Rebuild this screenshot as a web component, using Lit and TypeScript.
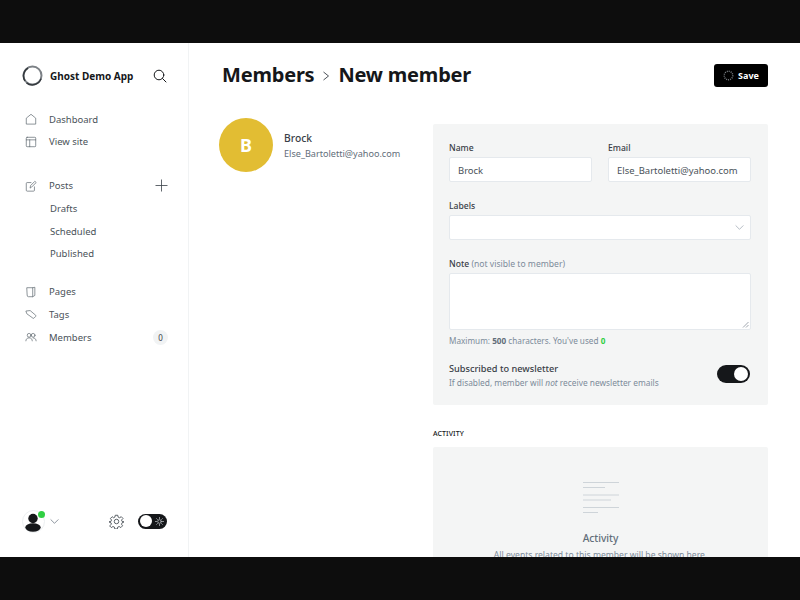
import { LitElement, html, css, svg } from "lit";
import { customElement } from "lit/decorators.js";

const ic = (body: unknown, size = 12, cls = "ic") => html`<svg class=${cls} width=${size} height=${size} viewBox="0 0 14 14" fill="none" stroke="currentColor" stroke-width="0.8" stroke-linecap="round" stroke-linejoin="round">${body}</svg>`;

const icons = {
  home: svg`<path d="M1.500 12.500V6L7 1.500 12.500 6v6.500z"/>`,
  site: svg`<rect x="1.500" y="1.500" width="11" height="11" rx="1"/><path d="M1.500 4.500h11M5.500 4.500v8"/>`,
  posts: svg`<path d="M7 3H2.500a1 1 0 0 0-1 1v8a1 1 0 0 0 1 1h7.500a1 1 0 0 0 1-1V8"/><path d="M6 9l.500-2.500L11.500 1.500 13 3 8 8z"/>`,
  pages: svg`<path d="M2.500 2h6.500v10.500H4a1.500 1.500 0 0 1-1.500-1.500z"/><path d="M9 2l2.500-.500v9.500L9 12.500"/>`,
  tags: svg`<path d="M1.500 3.500l4.500-.500 6.500 5.500a1 1 0 0 1 0 1.300l-2 2a1 1 0 0 1-1.300 0L2.500 7z"/>`,
  members: svg`<circle cx="4.800" cy="5" r="2.200"/><circle cx="9.500" cy="5" r="2.200"/><path d="M1 11.500c0-2 1.500-3.500 3.800-3.500s3.700 1.500 3.700 3.500M9.500 8c2 0 3.500 1.500 3.500 3.500"/>`,
};

const chev = (size: number) => html`<svg width=${size} height=${size} viewBox="0 0 10 10" fill="none" stroke="currentColor" stroke-width="0.8" stroke-linecap="round" stroke-linejoin="round"><path d="M1 3l4 4 4-4"/></svg>`;

@customElement("app-root")
export class AppRoot extends LitElement {
  static styles = css`
    :host { display: block; width: 800px; height: 600px; font-family: "Noto Sans", "Open Sans", sans-serif; color: #394047; background: #fff; overflow: hidden; }
    * { box-sizing: border-box; }
    .shell { display: flex; flex-direction: column; height: 600px; }
    .bar { height: 43px; background: #0d0d0d; flex: none; }
    .app { flex: 1; display: flex; min-height: 0; overflow: hidden; }

    .side { width: 189px; flex: none; border-right: 1px solid #f1f3f4; display: flex; flex-direction: column; padding: 22px 21px 24px 22px; }
    .brand { display: flex; align-items: center; height: 21px; margin-bottom: 22px; }
    .brand b { font-size: 10px; font-weight: 700; color: #15171a; margin-left: 7px; flex: 1; white-space: nowrap; }
    .search { color: #15171a; display: flex; }
    .nav { display: flex; flex-direction: column; }
    .item { display: flex; align-items: center; height: 22.600px; font-size: 9.500px; color: #4a5259; padding-left: 3px; }
    .item svg.ic { margin-right: 12px; color: #5a636b; flex: none; }
    .item .sp { flex: 1; }
    .sub { padding-left: 28px; }
    .gap { height: 21.500px; }
    .gap2 { height: 15.500px; }
    .count { width: 15px; height: 15px; border-radius: 50%; background: #f1f3f4; font-size: 8px; color: #394047; display: flex; align-items: center; justify-content: center; margin-right: -1px; }
    .plus { color: #394047; display: flex; margin-right: -1px; }
    .foot { margin-top: auto; display: flex; align-items: center; height: 24px; }
    .me { position: relative; width: 23px; height: 23px; border-radius: 50%; border: 1px solid #eceff1; flex: none; display: flex; }
    .dot { position: absolute; top: 0; right: -1px; width: 7px; height: 7px; border-radius: 50%; background: #30cf43; }
    .fchev { color: #626d79; margin-left: 5px; display: flex; }
    .gear { margin-left: 50px; color: #394047; display: flex; }
    .mode { margin-left: 14px; width: 29px; height: 15px; border-radius: 8px; background: #15171a; padding: 1.500px; display: flex; align-items: center; justify-content: space-between; color: #fff; }
    .knob { width: 12px; height: 12px; border-radius: 50%; background: #fff; }
    .mode svg { margin-right: 2px; }

    .main { flex: 1; min-width: 0; padding: 20px 32px 0 30px; overflow: hidden; }
    .head { display: flex; align-items: center; justify-content: space-between; height: 24px; margin-left: 3px; }
    h1 { margin: 0; font-size: 20px; font-weight: 700; color: #15171a; display: flex; align-items: center; letter-spacing: -0.2px; white-space: nowrap; line-height: 24px; }
    .crumb { color: #394047; margin: 2px 7px 0 7px; display: flex; }
    .save { width: 54px; height: 23px; border-radius: 3px; background: #000; color: #fff; font-size: 9px; font-weight: 700; display: flex; align-items: center; justify-content: center; gap: 4px; }
    .cols { display: flex; margin-top: 31px; }
    .who { width: 214px; flex: none; display: flex; align-items: flex-start; }
    .av { width: 54px; height: 54px; border-radius: 50%; background: #e2bd33; color: #fff; font-size: 18px; font-weight: 700; display: flex; align-items: center; justify-content: center; flex: none; }
    .wt { margin-left: 11px; padding-top: 13px; }
    .wn { font-size: 10.300px; font-weight: 500; color: #394047; line-height: 15px; }
    .we { font-size: 9.100px; color: #626d79; line-height: 15px; white-space: nowrap; }
    .right { width: 335px; flex: none; padding-top: 6px; }
    .card { background: #f4f5f5; border-radius: 2px; padding: 18px 17px 0 16px; height: 280.500px; }
    .two { display: grid; grid-template-columns: 143px 143px; column-gap: 16px; }
    label { display: block; font-size: 8.600px; line-height: 12px; color: #394047; font-weight: 500; margin-bottom: 3px; }
    label span { color: #7c8b9a; font-weight: 400; }
    .input { height: 25px; background: #fff; border: 1px solid #e5e9ed; border-radius: 2px; font-size: 9.450px; color: #4a5259; padding: 1px 8px 0; display: flex; align-items: center; white-space: nowrap; }
    .select { justify-content: flex-end; color: #9aa5b0; padding: 0 6px 0 0; }
    .f2 { margin-top: 18px; }
    .f3 { margin-top: 18px; }
    .area { position: relative; height: 57px; background: #fff; border: 1px solid #e5e9ed; border-radius: 2px; }
    .grip { position: absolute; right: 1px; bottom: 1px; color: #626d79; display: flex; }
    .hint { font-size: 8.200px; color: #7c8b9a; margin-top: 5px; line-height: 12px; white-space: nowrap; }
    .hint b { color: #626d79; font-weight: 700; }
    .hint i { color: #30cf43; font-style: normal; font-weight: 700; }
    .sw { display: flex; align-items: flex-start; justify-content: space-between; margin-top: 15px; }
    .swt { font-size: 9.200px; color: #394047; font-weight: 500; line-height: 13px; }
    .sws { font-size: 8.350px; color: #7c8b9a; line-height: 13px; margin-top: 1px; }
    .tog { width: 33px; height: 18px; border-radius: 9px; background: #15171a; padding: 2px; display: flex; justify-content: flex-end; margin: 3px 1px 0 0; }
    .tog span { width: 14px; height: 14px; border-radius: 50%; background: #fff; }
    .acth { font-size: 7px; font-weight: 500; color: #15171a; margin-top: 24.500px; line-height: 10px; letter-spacing: 0.100px; }
    .acard { background: #f4f5f5; border-radius: 2px; margin-top: 8px; height: 200px; padding-top: 35px; display: flex; flex-direction: column; align-items: center; }
    .acard svg { display: block; }
    .at { font-size: 10.200px; font-weight: 500; color: #626d79; margin-top: 18px; line-height: 14px; }
    .ad { font-size: 8.600px; color: #7c8b9a; margin-top: 3.500px; line-height: 13px; white-space: nowrap; }
  `;

  item(icon: unknown, label: string, extra: unknown = "") {
    return html`<div class="item">${ic(icon)}<span>${label}</span>${extra ? html`<span class="sp"></span>${extra}` : ""}</div>`;
  }

  render() {
    return html`<div class="shell">
      <div class="bar"></div>
      <div class="app">
        <aside class="side">
          <div class="brand">
            <svg width="21" height="21" viewBox="0 0 21 21" fill="none"><circle cx="10.500" cy="10.500" r="9" stroke="#7c8186" stroke-width="2"/><path d="M3 16a9.200 9.200 0 0 1 3-13M4.500 17.800a9.200 9.200 0 0 0 14.500-4" stroke="#34393e" stroke-width="1.500"/></svg>
            <b>Ghost Demo App</b>
            <span class="search"><svg width="14" height="14" viewBox="0 0 14 14" fill="none" stroke="currentColor" stroke-width="1" stroke-linecap="round"><circle cx="6" cy="6" r="4.800"/><path d="M9.500 9.500l3.500 3.500"/></svg></span>
          </div>
          <nav class="nav">
            ${this.item(icons.home, "Dashboard")}
            ${this.item(icons.site, "View site")}
            <div class="gap"></div>
            ${this.item(icons.posts, "Posts", html`<span class="plus"><svg width="13" height="13" viewBox="0 0 13 13" fill="none" stroke="currentColor" stroke-width="0.800"><path d="M6.500 0.500v12M0.500 6.500h12"/></svg></span>`)}
            <div class="item sub">Drafts</div>
            <div class="item sub">Scheduled</div>
            <div class="item sub">Published</div>
            <div class="gap2"></div>
            ${this.item(icons.pages, "Pages")}
            ${this.item(icons.tags, "Tags")}
            ${this.item(icons.members, "Members", html`<span class="count">0</span>`)}
          </nav>
          <div class="foot">
            <div class="me">
              <svg width="21" height="21" viewBox="0 0 21 21" fill="#15171a"><circle cx="10" cy="7.500" r="4.700"/><ellipse cx="10" cy="16.500" rx="7.700" ry="4.200"/></svg>
              <span class="dot"></span>
            </div>
            <span class="fchev">${chev(9)}</span>
            <span class="gear"><svg width="15" height="15" viewBox="0 0 24 24" fill="none" stroke="currentColor" stroke-width="1.300" stroke-linejoin="round"><circle cx="12" cy="12" r="3.600"/><path d="M10 2h4l.600 3 2.400 1 2.600-1.700 2.800 2.800L20 9.700l1 2.300 3 .600v0l-3 1.400-1 2.300 1.700 2.600-2.800 2.800-2.600-1.700-2.400 1-.600 3h-4l-.600-3-2.400-1-2.600 1.700-2.800-2.800L4 16.300l-1-2.300-3-1.400v0l3-.600 1-2.300-1.700-2.600 2.800-2.800L7 6l2.400-1z"/></svg></span>
            <span class="mode"><span class="knob"></span><svg width="9" height="9" viewBox="0 0 10 10" fill="none" stroke="#c8cdd1" stroke-width="0.800" stroke-linecap="round"><circle cx="5" cy="5" r="2"/><path d="M5 .500v1.200M5 8.300v1.200M.500 5h1.200M8.300 5h1.200M1.800 1.800l.900.900M7.300 7.300l.900.900M1.800 8.200l.900-.900M7.300 2.700l.900-.900"/></svg></span>
          </div>
        </aside>
        <main class="main">
          <div class="head">
            <h1>Members<span class="crumb"><svg width="10" height="12" viewBox="0 0 10 12" fill="none" stroke="currentColor" stroke-width="0.900"><path d="M2.500 2l5 4-5 4"/></svg></span>New member</h1>
            <div class="save"><svg width="11" height="11" viewBox="0 0 11 11" fill="none" stroke="#7a7f84" stroke-width="1.400" stroke-dasharray="1 1"><circle cx="5.500" cy="5.500" r="4.300"/></svg>Save</div>
          </div>
          <div class="cols">
            <div class="who">
              <div class="av">B</div>
              <div class="wt"><div class="wn">Brock</div><div class="we">Else_Bartoletti@yahoo.com</div></div>
            </div>
            <div class="right">
              <div class="card">
                <div class="two">
                  <div><label>Name</label><div class="input">Brock</div></div>
                  <div><label>Email</label><div class="input">Else_Bartoletti@yahoo.com</div></div>
                </div>
                <div class="f2"><label>Labels</label><div class="input select">${chev(9)}</div></div>
                <div class="f3"><label>Note <span>(not visible to member)</span></label>
                  <div class="area"><span class="grip"><svg width="7" height="7" viewBox="0 0 7 7" fill="none" stroke="currentColor" stroke-width="0.600"><path d="M6.500 1L1 6.500M6.500 4L4 6.500"/></svg></span></div>
                </div>
                <div class="hint">Maximum: <b>500</b> characters. You've used <i>0</i></div>
                <div class="sw">
                  <div><div class="swt">Subscribed to newsletter</div><div class="sws">If disabled, member will <em>not</em> receive newsletter emails</div></div>
                  <div class="tog"><span></span></div>
                </div>
              </div>
              <div class="acth">ACTIVITY</div>
              <div class="acard">
                <svg width="36" height="31" viewBox="0 0 36 31" fill="none" stroke="#ced4d9" stroke-width="1"><path d="M0 .500h36M0 5.500h22M0 13h36M0 18h28M0 25.500h36M0 30.500h15"/></svg>
                <div class="at">Activity</div>
                <div class="ad">All events related to this member will be shown here.</div>
              </div>
            </div>
          </div>
        </main>
      </div>
      <div class="bar"></div>
    </div>`;
  }
}
